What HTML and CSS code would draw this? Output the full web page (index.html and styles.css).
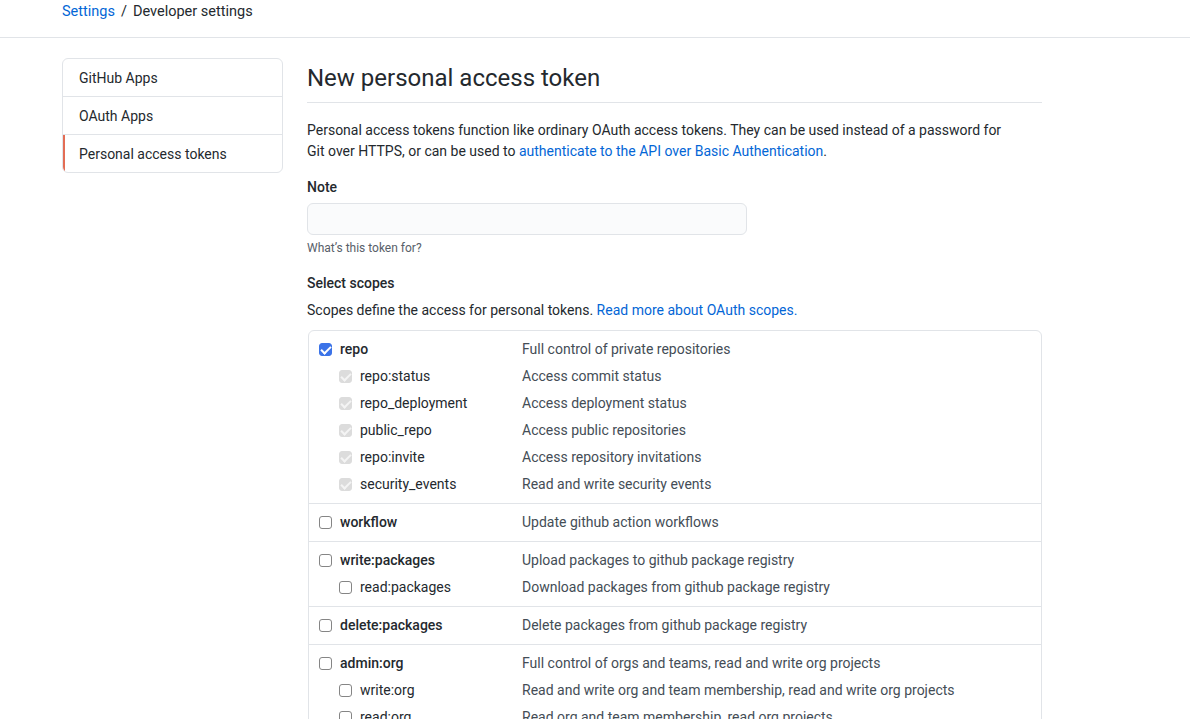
FILE: index.html
```html
<!DOCTYPE html>
<html>
<head>
<meta charset="utf-8">
<link rel="stylesheet" href="styles.css">
</head>
<body>
<header class="topbar">
  <nav class="crumbs"><a href="#" class="link">Settings</a><span class="sep">/</span><span class="crumb-cur">Developer settings</span></nav>
</header>
<div class="layout">
  <aside class="menu">
    <a href="#" class="menu-item">GitHub Apps</a>
    <a href="#" class="menu-item">OAuth Apps</a>
    <a href="#" class="menu-item active">Personal access tokens</a>
  </aside>
  <main class="content">
    <h1 class="title">New personal access token</h1>
    <p class="intro">Personal access tokens function like ordinary OAuth access tokens. They can be used instead of a password for Git over HTTPS, or can be used to <a href="#" class="link">authenticate to the API over Basic Authentication</a>.</p>
    <div class="field">
      <label class="label">Note</label>
      <input class="input" type="text">
      <p class="note">What’s this token for?</p>
    </div>
    <h2 class="label scopes-title">Select scopes</h2>
    <p class="scopes-desc">Scopes define the access for personal tokens. <a href="#" class="link">Read more about OAuth scopes.</a></p>
    <div class="scopes">
      <div class="group">
        <div class="row parent"><span class="name"><span class="cb checked"></span>repo</span><span class="desc">Full control of private repositories</span></div>
        <div class="row child"><span class="name"><span class="cb disabled"></span>repo:status</span><span class="desc">Access commit status</span></div>
        <div class="row child"><span class="name"><span class="cb disabled"></span>repo_deployment</span><span class="desc">Access deployment status</span></div>
        <div class="row child"><span class="name"><span class="cb disabled"></span>public_repo</span><span class="desc">Access public repositories</span></div>
        <div class="row child"><span class="name"><span class="cb disabled"></span>repo:invite</span><span class="desc">Access repository invitations</span></div>
        <div class="row child"><span class="name"><span class="cb disabled"></span>security_events</span><span class="desc">Read and write security events</span></div>
      </div>
      <div class="group">
        <div class="row parent"><span class="name"><span class="cb"></span>workflow</span><span class="desc">Update github action workflows</span></div>
      </div>
      <div class="group">
        <div class="row parent"><span class="name"><span class="cb"></span>write:packages</span><span class="desc">Upload packages to github package registry</span></div>
        <div class="row child"><span class="name"><span class="cb"></span>read:packages</span><span class="desc">Download packages from github package registry</span></div>
      </div>
      <div class="group">
        <div class="row parent"><span class="name"><span class="cb"></span>delete:packages</span><span class="desc">Delete packages from github package registry</span></div>
      </div>
      <div class="group">
        <div class="row parent"><span class="name"><span class="cb"></span>admin:org</span><span class="desc">Full control of orgs and teams, read and write org projects</span></div>
        <div class="row child"><span class="name"><span class="cb"></span>write:org</span><span class="desc">Read and write org and team membership, read and write org projects</span></div>
        <div class="row child"><span class="name"><span class="cb"></span>read:org</span><span class="desc">Read org and team membership, read org projects</span></div>
      </div>
    </div>
  </main>
</div>
</body>
</html>
```

FILE: styles.css
```css
* { box-sizing: border-box; }
html, body { margin: 0; padding: 0; background: #fff; }
body {
  font-family: Roboto, "Liberation Sans", sans-serif;
  font-size: 14px;
  line-height: 1.5;
  color: #24292e;
  overflow: hidden;
  height: 719px;
}
.link { color: #0366d6; text-decoration: none; }
.topbar {
  height: 38px;
  border-bottom: 1px solid #e1e4e8;
  padding: 0 62px;
}
.crumbs { display: flex; align-items: center; height: 23px; font-size: 14.5px; }
.sep { margin: 0 6px; color: #24292e; }
.crumb-cur { color: #24292e; }
.layout {
  display: flex;
  gap: 24px;
  padding: 20px 0 0 62px;
}
.menu {
  width: 221px;
  flex: none;
  border: 1px solid #e1e4e8;
  border-radius: 6px;
  display: flex;
  flex-direction: column;
  overflow: hidden;
  align-self: flex-start;
}
.menu-item {
  display: block;
  height: 38px;
  line-height: 36px;
  padding: 1px 16px 0;
  color: #24292e;
  text-decoration: none;
  border-bottom: 1px solid #e1e4e8;
}
.menu-item:last-child { border-bottom: 0; height: 37px; }
.menu-item.active { border-left: 2px solid #e36d55; padding-left: 14px; }
.content { width: 735px; flex: none; }
.title {
  margin: 0;
  font-size: 24px;
  font-weight: 400;
  line-height: 36px;
  padding: 2px 0 6px;
  border-bottom: 1px solid #e1e4e8;
}
.intro { margin: 17px 0 0; line-height: 21px; max-width: 710px; }
.field { margin-top: 15px; }
.label { display: block; font-weight: 500; font-size: 14px; margin: 0; line-height: 21px; }
.input {
  display: block;
  margin-top: 5px;
  width: 440px;
  height: 32px;
  border: 1px solid #e1e4e8;
  border-radius: 6px;
  background: #fafbfc;
  font: inherit;
}
.note { margin: 4px 0 0; font-size: 12px; color: #586069; line-height: 18px; }
.scopes-title { margin-top: 16px; }
.scopes-desc { margin: 6px 0 0; line-height: 21px; }
.scopes {
  margin-top: 9px;
  margin-left: 1px;
  border: 1px solid #e1e4e8;
  border-radius: 6px;
}
.group { padding: 5px 0 5px; border-top: 1px solid #e1e4e8; }
.group:first-child { border-top: 0; }
.row { display: flex; height: 27px; align-items: center; }
.name { width: 213px; display: flex; align-items: center; padding-left: 10px; }
.parent .name { font-weight: 500; }
.child .name { padding-left: 30px; }
.desc { color: #444d56; }
.cb {
  width: 13px; height: 13px;
  border: 1px solid #858585;
  border-radius: 3px;
  background: #fff;
  margin-right: 8px;
  flex: none;
  position: relative;
}
.cb.checked { background: #3b73e8; border-color: #3b73e8; }
.cb.disabled { background: #dcdcdc; border-color: #dcdcdc; }
.cb.checked::after, .cb.disabled::after {
  content: "";
  position: absolute;
  left: 3px; top: 0px;
  width: 4px; height: 8px;
  border: solid #fff;
  border-width: 0 2px 2px 0;
  transform: rotate(45deg);
}
.cb.disabled::after { border-color: #f4f4f4; }
```
